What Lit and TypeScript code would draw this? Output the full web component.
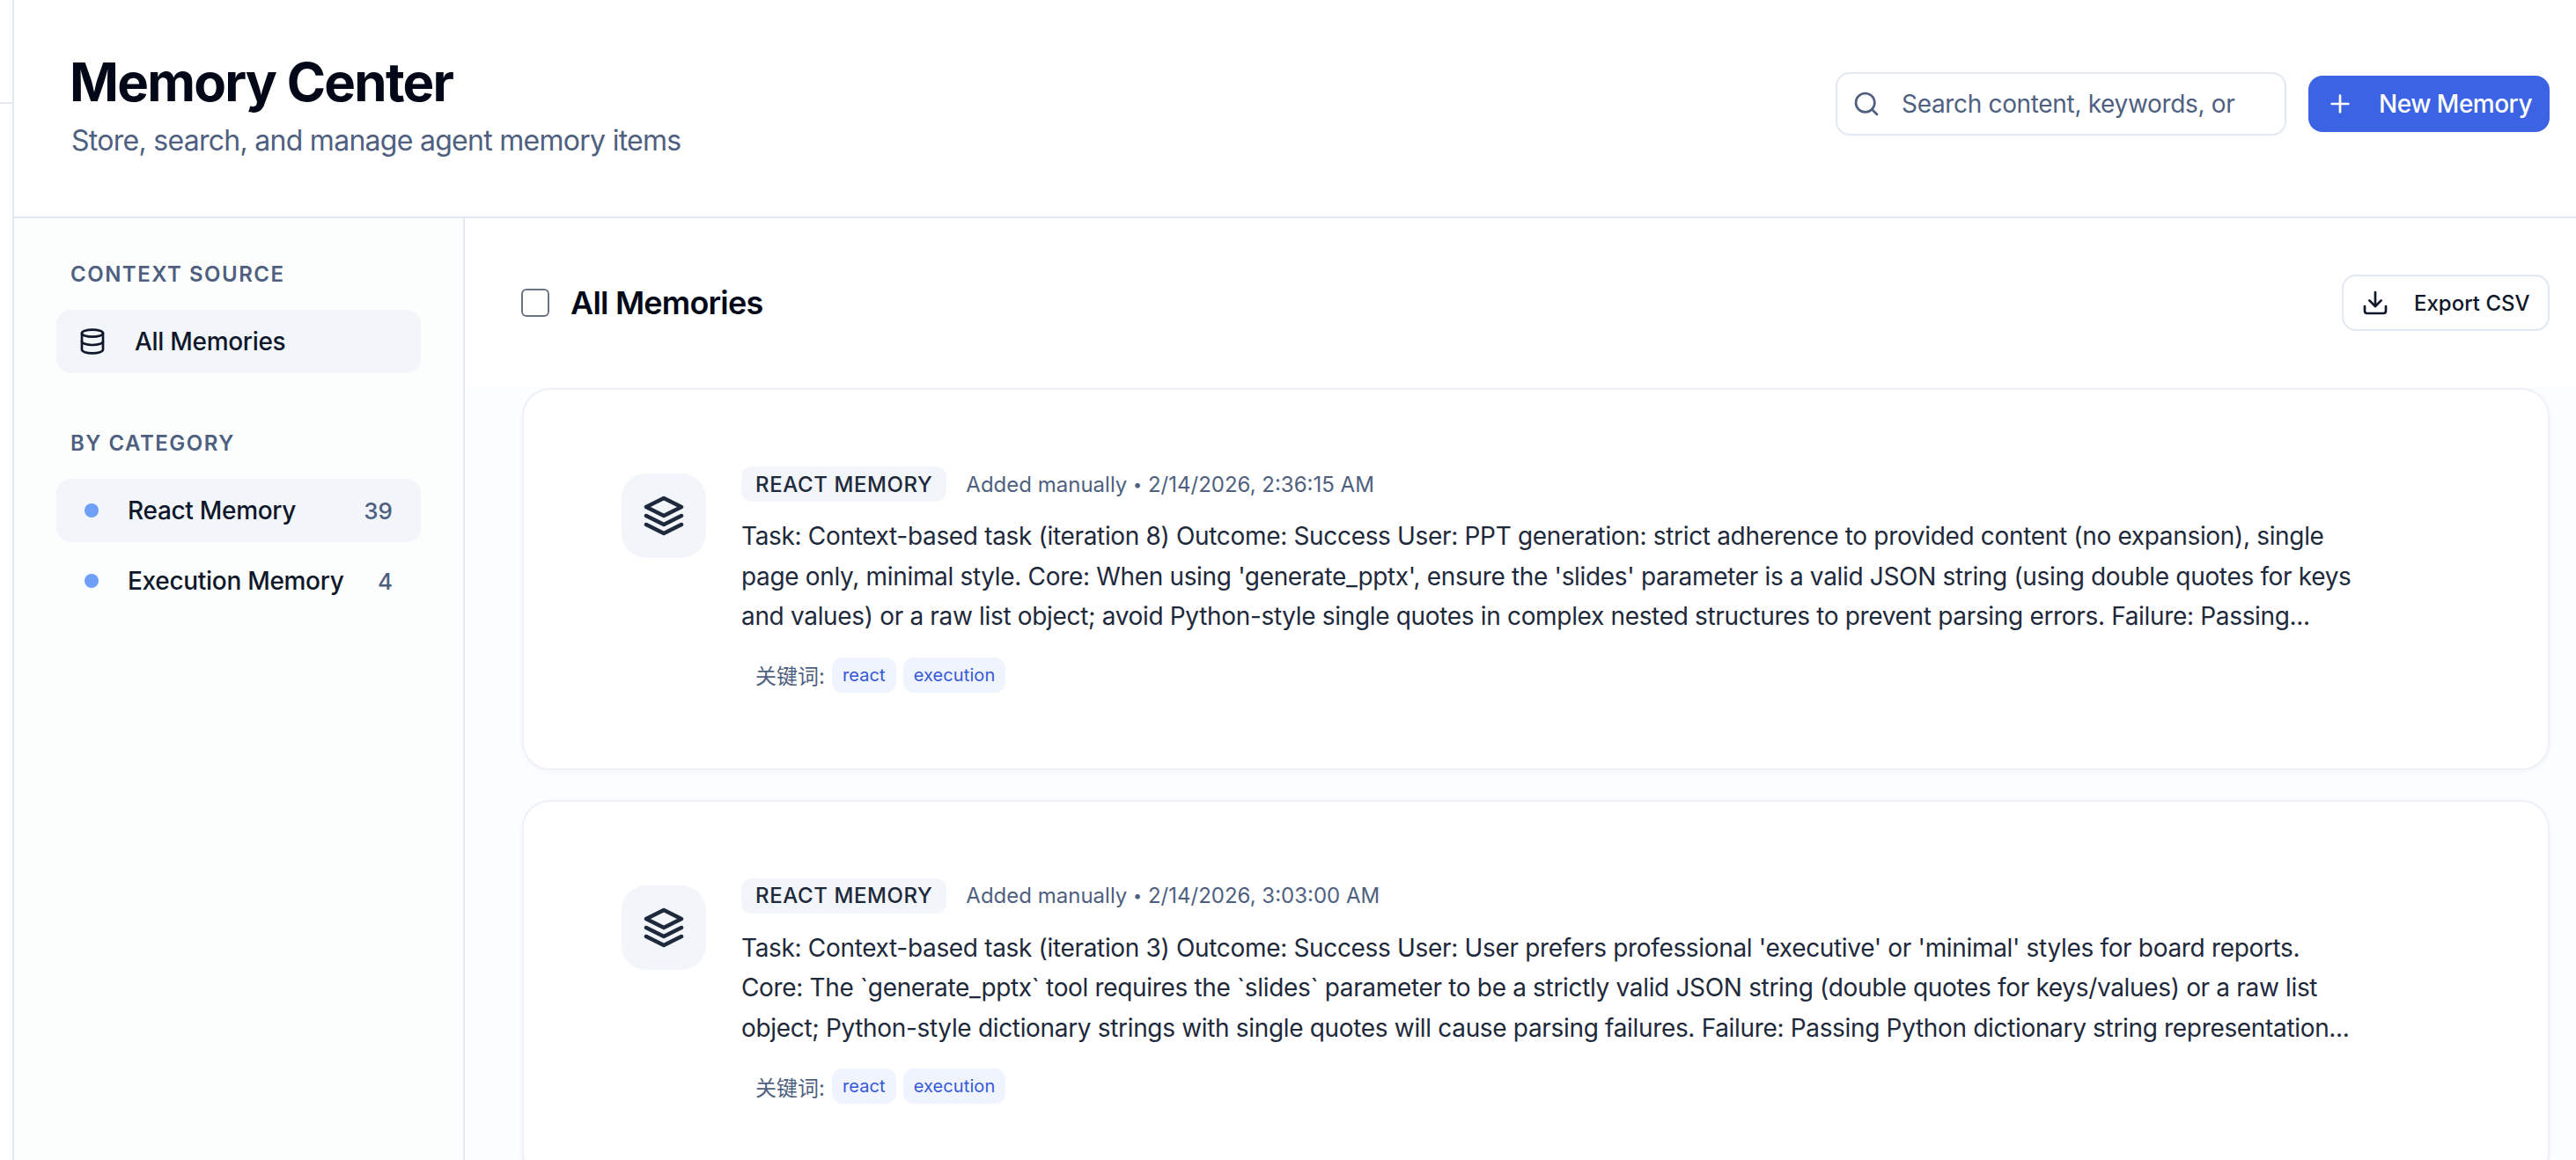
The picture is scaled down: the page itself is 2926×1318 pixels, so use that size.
import { LitElement, html, css, svg } from 'lit'
import { customElement } from 'lit/decorators.js'

const memories = [
  {
    date: '2/14/2026, 2:36:15 AM',
    text: "Task: Context-based task (iteration 8) Outcome: Success User: PPT generation: strict adherence to provided content (no expansion), single page only, minimal style. Core: When using 'generate_pptx', ensure the 'slides' parameter is a valid JSON string (using double quotes for keys and values) or a raw list object; avoid Python-style single quotes in complex nested structures to prevent parsing errors. Failure: Passing..."
  },
  {
    date: '2/14/2026, 3:03:00 AM',
    text: "Task: Context-based task (iteration 3) Outcome: Success User: User prefers professional 'executive' or 'minimal' styles for board reports. Core: The `generate_pptx` tool requires the `slides` parameter to be a strictly valid JSON string (double quotes for keys/values) or a raw list object; Python-style dictionary strings with single quotes will cause parsing failures. Failure: Passing Python dictionary string representation..."
  }
]

const icon = (size: number, width: number, body: unknown) => html`
  <svg
    class="icon"
    width=${size}
    height=${size}
    viewBox="0 0 24 24"
    fill="none"
    stroke="currentColor"
    stroke-width=${width}
    stroke-linecap="round"
    stroke-linejoin="round">
    ${body}
  </svg>
`

const searchIcon = svg`<circle cx="11" cy="11" r="8"></circle><path d="m21 21-4.3-4.3"></path>`
const plusIcon = svg`<path d="M5 12h14"></path><path d="M12 5v14"></path>`
const downloadIcon = svg`<path d="M21 15v4a2 2 0 0 1-2 2H5a2 2 0 0 1-2-2v-4"></path><path d="m7 10 5 5 5-5"></path><path d="M12 15V3"></path>`
const databaseIcon = svg`<ellipse cx="12" cy="5" rx="9" ry="3"></ellipse><path d="M3 5v14a9 3 0 0 0 18 0V5"></path><path d="M3 12a9 3 0 0 0 18 0"></path>`
const layersIcon = svg`<path d="M12 2 2 7l10 5 10-5-10-5Z"></path><path d="m2 17 10 5 10-5"></path><path d="m2 12 10 5 10-5"></path>`

@customElement('app-root')
export class AppRoot extends LitElement {
  static styles = css`
    * {
      box-sizing: border-box;
    }

    :host {
      display: grid;
      grid-template-columns: 16px 1fr;
      width: 2926px;
      height: 1318px;
      overflow: hidden;
      background: #fff;
      color: #0f172a;
      font-family: Inter, 'Noto Sans CJK SC', sans-serif;
    }

    .icon {
      flex: none;
      display: block;
    }

    .strip {
      border-right: 2px solid #e2e8f0;
    }

    .strip-head {
      height: 118px;
      border-bottom: 2px solid #e2e8f0;
    }

    .shell {
      display: flex;
      flex-direction: column;
      min-width: 0;
    }

    .header {
      flex: none;
      display: flex;
      align-items: center;
      justify-content: space-between;
      height: 248px;
      padding: 0 30px 10px 63px;
      border-bottom: 2px solid #e2e8f0;
    }

    h1 {
      margin: 0 0 11px;
      font-size: 60px;
      line-height: 72px;
      font-weight: 700;
      letter-spacing: -1.75px;
      color: #020817;
    }

    .subtitle {
      margin: 0 0 0 2px;
      font-size: 32px;
      line-height: 40px;
      letter-spacing: -0.72px;
      color: #4f5f7f;
    }

    .controls {
      display: flex;
      align-items: center;
      gap: 25px;
    }

    .search {
      display: flex;
      align-items: center;
      gap: 24px;
      width: 512px;
      height: 72px;
      padding: 0 17px;
      background: #fff;
      border: 2px solid #e2e8f0;
      border-radius: 16px;
      color: #4f5f7f;
    }

    .search input {
      flex: 1;
      min-width: 0;
      border: none;
      outline: none;
      padding: 0;
      background: transparent;
      font: inherit;
      font-size: 28px;
      letter-spacing: -0.33px;
    }

    .search input::placeholder {
      color: #4f5f7f;
      opacity: 1;
    }

    button {
      display: flex;
      align-items: center;
      gap: 28px;
      font-family: inherit;
      font-weight: 500;
      white-space: nowrap;
      cursor: pointer;
    }

    .primary {
      width: 274px;
      height: 64px;
      padding: 0 20px;
      border: none;
      border-radius: 16px;
      background: #3b63e3;
      color: #fff;
      font-size: 28px;
      letter-spacing: -0.5px;
    }

    .body {
      flex: 1;
      display: grid;
      grid-template-columns: 512px 1fr;
      min-height: 0;
    }

    .sidebar {
      padding: 48px 48px 0 48px;
      background: #fcfefe;
      border-right: 2px solid #e2e8f0;
    }

    .label {
      margin: 0 0 24px 16px;
      font-size: 24px;
      line-height: 32px;
      font-weight: 600;
      letter-spacing: 1.5px;
      color: #4f5f7f;
    }

    .label.second {
      margin-top: 64px;
    }

    .items {
      display: flex;
      flex-direction: column;
      gap: 8px;
    }

    .item {
      display: flex;
      align-items: center;
      height: 72px;
      padding: 0 32px 0 32px;
      border-radius: 16px;
      font-size: 28px;
      font-weight: 500;
      letter-spacing: -0.3px;
    }

    .item.active {
      background: #f2f5fa;
    }

    .item.source {
      gap: 32px;
      padding: 0 25px;
    }

    .dot {
      flex: none;
      width: 16px;
      height: 16px;
      margin-right: 33px;
      border-radius: 50%;
      background: #6ea0f8;
    }

    .name {
      flex: 1;
    }

    .count {
      font-size: 26px;
      letter-spacing: 0;
      color: #4f5f7f;
    }

    .main {
      min-width: 0;
      display: flex;
      flex-direction: column;
    }

    .toolbar {
      flex: none;
      display: flex;
      align-items: center;
      height: 192px;
      padding: 0 30px 0 64px;
      background: #fff;
    }

    .check {
      flex: none;
      width: 32px;
      height: 32px;
      margin: 0 24px 0 0;
      appearance: none;
      background: #fff;
      border: 2px solid #6b7280;
      border-radius: 6px;
    }

    h2 {
      flex: 1;
      margin: 0;
      font-size: 36px;
      line-height: 44px;
      font-weight: 600;
      letter-spacing: -0.8px;
      color: #020817;
    }

    .export {
      width: 236px;
      height: 64px;
      padding: 0 20px;
      background: #fff;
      border: 2px solid #e2e8f0;
      border-radius: 16px;
      color: #0f172a;
      font-size: 24px;
    }

    .list {
      flex: 1;
      display: flex;
      flex-direction: column;
      gap: 34px;
      padding: 1px 30px 0 65px;
      background: #fcfdfe;
    }

    .card {
      flex: none;
      display: flex;
      align-items: flex-start;
      gap: 40px;
      padding: 87px 219px 86px 111px;
      background: #fff;
      border: 2px solid #eef1f7;
      border-radius: 32px;
      box-shadow: 0 2px 6px rgba(15, 23, 42, 0.04);
    }

    .tile {
      flex: none;
      display: flex;
      align-items: center;
      justify-content: center;
      width: 96px;
      height: 96px;
      margin-top: 8px;
      border-radius: 28px;
      background: #f2f5fa;
      color: #1e293b;
    }

    .content {
      flex: 1;
      min-width: 0;
    }

    .meta {
      display: flex;
      align-items: center;
      gap: 22px;
      height: 40px;
      font-size: 24px;
      color: #4f5f7f;
    }

    .sep {
      font-size: 18px;
      vertical-align: 2px;
    }

    .type {
      display: flex;
      align-items: center;
      height: 40px;
      padding: 0 16px;
      border-radius: 12px;
      background: #f2f5fa;
      color: #1e293b;
      font-weight: 500;
      letter-spacing: 0.6px;
    }

    .text {
      margin: 17px 0 23px;
      font-size: 28px;
      line-height: 45.5px;
      letter-spacing: -0.33px;
      color: #1e293b;
    }

    .keywords {
      display: flex;
      align-items: center;
      gap: 8px;
      padding-left: 16px;
      font-size: 24px;
      color: #4f5f7f;
    }

    .keyword {
      display: flex;
      align-items: center;
      height: 40px;
      padding: 0 12px;
      border-radius: 12px;
      background: #eff4fe;
      color: #3659d8;
      font-size: 20px;
      letter-spacing: 0.1px;
    }
  `

  render() {
    return html`
      <div class="strip"><div class="strip-head"></div></div>
      <div class="shell">
        <header class="header">
          <div>
            <h1>Memory Center</h1>
            <p class="subtitle">Store, search, and manage agent memory items</p>
          </div>
          <div class="controls">
            <label class="search">
              ${icon(32, 2, searchIcon)}
              <input placeholder="Search content, keywords, or" />
            </label>
            <button class="primary">${icon(32, 2, plusIcon)}New Memory</button>
          </div>
        </header>
        <div class="body">
          <aside class="sidebar">
            <p class="label">CONTEXT SOURCE</p>
            <div class="items">
              <div class="item source active">${icon(32, 2, databaseIcon)}All Memories</div>
            </div>
            <p class="label second">BY CATEGORY</p>
            <div class="items">
              <div class="item active">
                <span class="dot"></span><span class="name">React Memory</span><span class="count">39</span>
              </div>
              <div class="item">
                <span class="dot"></span><span class="name">Execution Memory</span><span class="count">4</span>
              </div>
            </div>
          </aside>
          <main class="main">
            <div class="toolbar">
              <input class="check" type="checkbox" />
              <h2>All Memories</h2>
              <button class="export">${icon(32, 2, downloadIcon)}Export CSV</button>
            </div>
            <div class="list">${memories.map(m => this.renderCard(m))}</div>
          </main>
        </div>
      </div>
    `
  }

  renderCard(m: { date: string; text: string }) {
    return html`
      <article class="card">
        <div class="tile">${icon(48, 2.25, layersIcon)}</div>
        <div class="content">
          <div class="meta">
            <span class="type">REACT MEMORY</span>
            <span>Added manually <span class="sep">•</span> ${m.date}</span>
          </div>
          <p class="text">${m.text}</p>
          <div class="keywords">
            <span>关键词:</span>
            <span class="keyword">react</span>
            <span class="keyword">execution</span>
          </div>
        </div>
      </article>
    `
  }
}
